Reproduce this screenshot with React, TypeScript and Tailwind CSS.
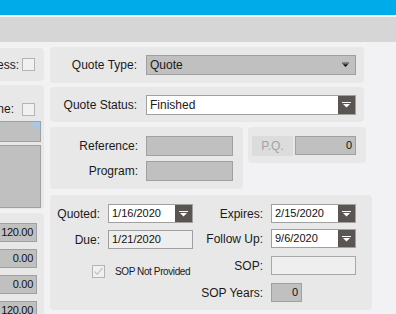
import { FC, ReactNode } from "react";

/* ------------------------------------------------------------------ */
/*                         Small building blocks                      */
/* ------------------------------------------------------------------ */

const Panel: FC<{ className?: string; children?: ReactNode }> = ({
  className = "",
  children,
}) => <div className={`bg-[#e8e8e8] rounded-[4px] ${className}`}>{children}</div>;

const DropArrow: FC<{ color?: string; size?: number }> = ({ color = "#ffffff", size = 9 }) => (
  <svg width={size} height="6" viewBox="0 0 9 6">
    <rect x="0" y="0" width="9" height="1" fill={color} />
    <path d="M1 2 H8 L4.5 5.5 Z" fill={color} />
  </svg>
);

// date box with the dark dropdown button on the right
const DateBox: FC<{ value: string }> = ({ value }) => (
  <div className="flex h-[19px] w-[85px] border border-[#a0a0a0] bg-white">
    <div className="flex-1 pl-[3px] text-[11px] leading-[17px] text-[#111]">{value}</div>
    <div className="flex w-[17px] items-center justify-center bg-[#5a5553]">
      <DropArrow />
    </div>
  </div>
);

const CheckBox: FC<{ checked?: boolean }> = ({ checked }) => (
  <div className="flex h-[13px] w-[13px] items-center justify-center border border-[#b4b4b4] bg-[#f1f1f1]">
    {checked && (
      <svg width="11" height="11" viewBox="0 0 11 11">
        <path d="M1.5 5.5 L4.2 8.3 L9.5 2" stroke="#c4c4c4" strokeWidth="1.3" fill="none" />
      </svg>
    )}
  </div>
);

const NumBox: FC<{ value: string; className?: string }> = ({ value, className = "" }) => (
  <div
    className={`h-[19px] border border-[#a0a0a0] bg-[#c0c0c0] pr-[3px] text-right text-[11px] leading-[17px] text-[#111] ${className}`}
  >
    {value}
  </div>
);

/* ------------------------------------------------------------------ */
/*                               App                                  */
/* ------------------------------------------------------------------ */

export default function App() {
  return (
    <div
      className="h-[314px] w-[396px] overflow-hidden bg-[#f2f2f4] text-[12px] text-[#1a1a1a]"
      style={{ fontFamily: '"Liberation Sans", Arial, sans-serif' }}
    >
      {/* title strip */}
      <div className="h-[15px] bg-[#00abe9]" />
      <div className="h-[2px] bg-[#f4f4f4]" />
      <div className="h-[25px] bg-[#d6d6d6]" />

      <div className="flex pt-[5px]">
        {/* left column, cut off by the window edge */}
        <div className="ml-[-76px] flex w-[120px] shrink-0 flex-col">
          <Panel className="mt-[1px] flex h-[33px] items-center justify-end pr-[9px]">
            <span className="mr-[3px]">Business:</span>
            <CheckBox />
          </Panel>
          <Panel className="mt-[4px] flex h-[124px] flex-col items-end pr-[3px] pt-[15px]">
            <div className="flex items-center pr-[6px]">
              <span className="mr-[8px]">Phone:</span>
              <CheckBox />
            </div>
            <div className="relative mt-[3px] h-[21px] w-full border border-[#a0a0a0] bg-[#c0c0c0]">
              <div className="absolute right-0 top-0 h-0 w-0 border-l-[10px] border-t-[10px] border-l-transparent border-t-[#a9c7e6]" />
            </div>
            <div className="mt-[3px] h-[63px] w-full border border-[#a0a0a0] bg-[#c0c0c0]" />
          </Panel>
          <Panel className="mt-[4px] flex h-[110px] flex-col gap-[7px] pr-[7px] pt-[10px] tracking-[-0.3px]">
            <NumBox value="120.00" />
            <NumBox value="0.00" />
            <NumBox value="0.00" />
            <NumBox value="120.00" />
          </Panel>
        </div>

        {/* main column */}
        <div className="ml-[6px] flex w-[322px] shrink-0 flex-col">
          <Panel className="flex h-[36px] w-[314px] items-center">
            <div className="w-[87px] text-right">Quote Type:</div>
            <div className="ml-[9px] flex h-[20px] w-[210px] items-center border border-[#9f9f9f] bg-[#c0c0c0] pl-[3px] pr-[6px]">
              <span className="flex-1">Quote</span>
              <DropArrow color="#111" size={7} />
            </div>
          </Panel>

          <Panel className="mt-[4px] flex h-[35px] w-[314px] items-center">
            <div className="w-[87px] text-right">Quote Status:</div>
            <div className="ml-[9px] flex h-[20px] w-[210px] border border-[#a0a0a0] bg-white">
              <span className="flex-1 pl-[3px] leading-[18px]">Finished</span>
              <div className="flex w-[17px] items-center justify-center bg-[#5a5553]">
                <DropArrow />
              </div>
            </div>
          </Panel>

          <div className="mt-[5px] flex items-start">
            <Panel className="flex h-[62px] w-[193px] flex-col gap-[5px] pt-[9px]">
              <div className="flex items-center">
                <div className="w-[88px] text-right">Reference:</div>
                <div className="ml-[8px] h-[20px] w-[87px] border border-[#a0a0a0] bg-[#c0c0c0]" />
              </div>
              <div className="flex items-center">
                <div className="w-[88px] text-right">Program:</div>
                <div className="ml-[8px] h-[20px] w-[87px] border border-[#a0a0a0] bg-[#c0c0c0]" />
              </div>
            </Panel>
            <Panel className="ml-[5px] flex h-[36px] w-[118px] items-start pl-[4px] pt-[9px]">
              <div className="flex h-[20px] w-[41px] items-center justify-center bg-[#dcdcdc] text-[#a3a3a3]">
                P.Q.
              </div>
              <NumBox value="0" className="ml-[2px] w-[61px]" />
            </Panel>
          </div>

          <Panel className="mt-[6px] flex h-[115px] w-[322px]">
            {/* dates, left side */}
            <div className="flex w-[143px] flex-col pt-[9px]">
              <div className="flex items-center">
                <div className="w-[50px] text-right">Quoted:</div>
                <div className="ml-[8px]">
                  <DateBox value="1/16/2020" />
                </div>
              </div>
              <div className="mt-[7px] flex items-center">
                <div className="w-[50px] text-right">Due:</div>
                <div className="ml-[8px] h-[19px] w-[85px] border border-[#a0a0a0] bg-[#eeeeee] pl-[3px] text-[11px] leading-[17px] text-[#111]">
                  1/21/2020
                </div>
              </div>
              <div className="ml-[42px] mt-[15px] flex items-center">
                <CheckBox checked />
                <span className="ml-[10px] whitespace-nowrap text-[10px] tracking-[-0.4px] text-[#1a1a1a]">
                  SOP Not Provided
                </span>
              </div>
            </div>

            {/* dates, right side */}
            <div className="flex w-[163px] flex-col pt-[9px]">
              <div className="flex items-center">
                <div className="w-[70px] text-right">Expires:</div>
                <div className="ml-[8px]">
                  <DateBox value="2/15/2020" />
                </div>
              </div>
              <div className="mt-[6px] flex items-center">
                <div className="w-[70px] text-right">Follow Up:</div>
                <div className="ml-[8px]">
                  <DateBox value="9/6/2020" />
                </div>
              </div>
              <div className="mt-[8px] flex items-center">
                <div className="w-[70px] text-right">SOP:</div>
                <div className="ml-[8px] h-[19px] w-[85px] border border-[#a8a8a8] bg-[#efefef]" />
              </div>
              <div className="mt-[8px] flex items-center">
                <div className="w-[70px] text-right">SOP Years:</div>
                <NumBox value="0" className="ml-[8px] w-[31px]" />
              </div>
            </div>
          </Panel>
        </div>
      </div>
    </div>
  );
}
